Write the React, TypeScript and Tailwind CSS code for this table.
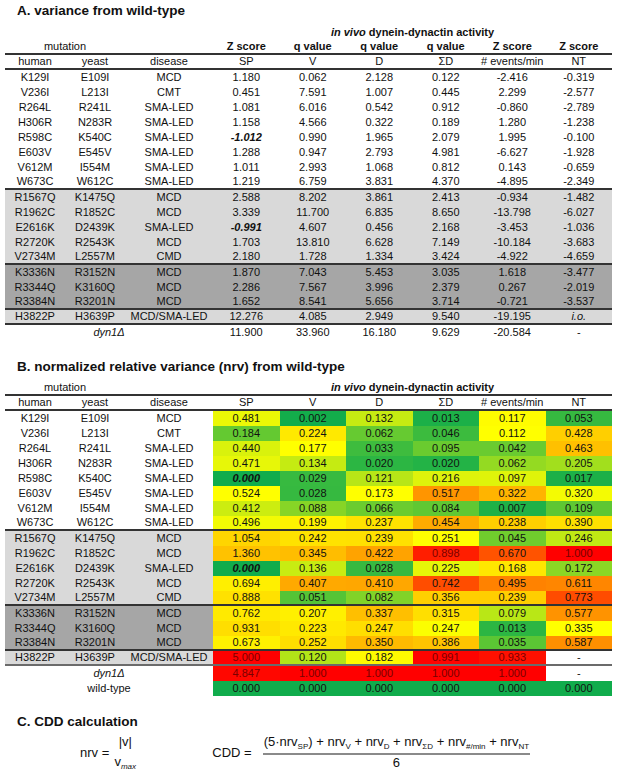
const FONT = "font-['Liberation_Sans',Arial,Helvetica,sans-serif]";
const GRID = "grid grid-cols-[60px_60px_88px_repeat(6,66.5px)] h-[15px]";
const CELL = "flex items-center justify-center whitespace-nowrap";
const LIGHT = "bg-[#d9d9d9]";
const DARK = "bg-[#a6a6a6]";
const TITLE = "pl-[17px] h-[22px] leading-[22px] text-[13.5px] font-bold";

const MUT = [
  ["K129I", "E109I", "MCD"],
  ["V236I", "L213I", "CMT"],
  ["R264L", "R241L", "SMA-LED"],
  ["H306R", "N283R", "SMA-LED"],
  ["R598C", "K540C", "SMA-LED"],
  ["E603V", "E545V", "SMA-LED"],
  ["V612M", "I554M", "SMA-LED"],
  ["W673C", "W612C", "SMA-LED"],
  ["R1567Q", "K1475Q", "MCD"],
  ["R1962C", "R1852C", "MCD"],
  ["E2616K", "D2439K", "SMA-LED"],
  ["R2720K", "R2543K", "MCD"],
  ["V2734M", "L2557M", "CMD"],
  ["K3336N", "R3152N", "MCD"],
  ["R3344Q", "K3160Q", "MCD"],
  ["R3384N", "R3201N", "MCD"],
  ["H3822P", "H3639P", "MCD/SMA-LED"],
];

// "!" = bold italic, "~" = italic
const A_VALS = [
  ["1.180", "0.062", "2.128", "0.122", "-2.416", "-0.319"],
  ["0.451", "7.591", "1.007", "0.445", "2.299", "-2.577"],
  ["1.081", "6.016", "0.542", "0.912", "-0.860", "-2.789"],
  ["1.158", "4.566", "0.322", "0.189", "1.280", "-1.238"],
  ["!-1.012", "0.990", "1.965", "2.079", "1.995", "-0.100"],
  ["1.288", "0.947", "2.793", "4.981", "-6.627", "-1.928"],
  ["1.011", "2.993", "1.068", "0.812", "0.143", "-0.659"],
  ["1.219", "6.759", "3.831", "4.370", "-4.895", "-2.349"],
  ["2.588", "8.202", "3.861", "2.413", "-0.934", "-1.482"],
  ["3.339", "11.700", "6.835", "8.650", "-13.798", "-6.027"],
  ["!-0.991", "4.607", "0.456", "2.168", "-3.453", "-1.036"],
  ["1.703", "13.810", "6.628", "7.149", "-10.184", "-3.683"],
  ["2.180", "1.728", "1.334", "3.424", "-4.922", "-4.659"],
  ["1.870", "7.043", "5.453", "3.035", "1.618", "-3.477"],
  ["2.286", "7.567", "3.996", "2.379", "0.267", "-2.019"],
  ["1.652", "8.541", "5.656", "3.714", "-0.721", "-3.537"],
  ["12.276", "4.085", "2.949", "9.540", "-19.195", "~i.o."],
];
const A_DYN = ["11.900", "33.960", "16.180", "9.629", "-20.584", "-"];

const B_VALS: (number | null)[][] = [
  [0.481, 0.002, 0.132, 0.013, 0.117, 0.053],
  [0.184, 0.224, 0.062, 0.046, 0.112, 0.428],
  [0.44, 0.177, 0.033, 0.095, 0.042, 0.463],
  [0.471, 0.134, 0.02, 0.02, 0.062, 0.205],
  [0.0, 0.029, 0.121, 0.216, 0.097, 0.017],
  [0.524, 0.028, 0.173, 0.517, 0.322, 0.32],
  [0.412, 0.088, 0.066, 0.084, 0.007, 0.109],
  [0.496, 0.199, 0.237, 0.454, 0.238, 0.39],
  [1.054, 0.242, 0.239, 0.251, 0.045, 0.246],
  [1.36, 0.345, 0.422, 0.898, 0.67, 1.0],
  [0.0, 0.136, 0.028, 0.225, 0.168, 0.172],
  [0.694, 0.407, 0.41, 0.742, 0.495, 0.611],
  [0.888, 0.051, 0.082, 0.356, 0.239, 0.773],
  [0.762, 0.207, 0.337, 0.315, 0.079, 0.577],
  [0.931, 0.223, 0.247, 0.247, 0.013, 0.335],
  [0.673, 0.252, 0.35, 0.386, 0.035, 0.587],
  [5.0, 0.12, 0.182, 0.991, 0.933, null],
  [4.847, 1.0, 1.0, 1.0, 1.0, null],
  [0.0, 0.0, 0.0, 0.0, 0.0, 0.0],
];

// 3-colour scale per column: min green, median yellow, max red
const STATS = [0, 1, 2, 3, 4, 5].map((c) => {
  const v = B_VALS.map((r) => r[c]).filter((x): x is number => x !== null).sort((a, b) => a - b);
  const p = (v.length - 1) / 2;
  const mid = (v[Math.floor(p)] + v[Math.ceil(p)]) / 2;
  return { min: v[0], mid, max: v[v.length - 1] };
});

const G = [16, 172, 76];
const Y = [255, 255, 0];
const R = [255, 0, 0];

function heat(v: number, c: number) {
  const { min, mid, max } = STATS[c];
  let a = G, b = Y, t = 1;
  if (v <= mid) t = mid === min ? 1 : (v - min) / (mid - min);
  else { a = Y; b = R; t = Math.pow((v - mid) / (max - mid), 0.85); }
  const rgb = a.map((x, i) => Math.round(x + (b[i] - x) * t));
  const hot = v > mid && t > 0.8;
  return { bg: `rgb(${rgb.join(",")})`, fg: hot ? "#7a0000" : "#111" };
}

const shade = (i: number) => (i >= 13 && i <= 15 ? DARK : i >= 8 ? LIGHT : "");
const rule = (i: number) => ([7, 12, 15, 16].includes(i) ? "border-b-2 border-[#333]" : "");

function Val({ v }: { v: string }) {
  if (v.startsWith("!")) return <b><i>{v.slice(1)}</i></b>;
  if (v.startsWith("~")) return <i>{v.slice(1)}</i>;
  return <>{v}</>;
}

function Mut({ m, bg = "" }: { m: string[]; bg?: string }) {
  return (
    <>
      {m.map((t) => (
        <div key={t} className={`${CELL} ${bg}`}>{t}</div>
      ))}
    </>
  );
}

function SectionA() {
  return (
    <div>
      <div className={TITLE}>A. variance from wild-type</div>
      <div className="ml-[5px] w-[607px]">
        <div className={`${GRID} mt-[3px]`}>
          <div className={`${CELL} col-start-4 col-span-6 font-bold`}>
            <i>in vivo</i>&nbsp;dynein-dynactin activity
          </div>
        </div>
        <div className={`${GRID} border-b-2 border-[#333]`}>
          <div className={`${CELL} col-span-2`}>mutation</div>
          <div />
          {["Z score", "q value", "q value", "q value", "Z score", "Z score"].map((h, i) => (
            <div key={i} className={`${CELL} font-bold`}>{h}</div>
          ))}
        </div>
        <div className={`${GRID} border-b-2 border-[#333]`}>
          {["human", "yeast", "disease", "SP", "V", "D", "ΣD", "# events/min", "NT"].map((h) => (
            <div key={h} className={CELL}>{h}</div>
          ))}
        </div>
        {MUT.map((m, i) => (
          <div key={m[0]} className={`${GRID} ${shade(i)} ${rule(i)}`}>
            <Mut m={m} />
            {A_VALS[i].map((v, j) => (
              <div key={j} className={CELL}><Val v={v} /></div>
            ))}
          </div>
        ))}
        <div className={GRID}>
          <div className={`${CELL} col-span-3 italic`}>dyn1Δ</div>
          {A_DYN.map((v, j) => (
            <div key={j} className={CELL}>{v}</div>
          ))}
        </div>
      </div>
    </div>
  );
}

function HeatCell({ v, c, bold }: { v: number | null; c: number; bold?: boolean }) {
  if (v === null) return <div className={CELL}>-</div>;
  const { bg, fg } = heat(v, c);
  return (
    <div className={CELL} style={{ background: bg, color: fg }}>
      {bold ? <b><i>{v.toFixed(3)}</i></b> : v.toFixed(3)}
    </div>
  );
}

function SectionB() {
  return (
    <div className="mt-[16px]">
      <div className={TITLE}>B. normalized relative variance (nrv) from wild-type</div>
      <div className="ml-[5px] w-[607px]">
        <div className={`${GRID} mt-[3px] border-b-2 border-[#333]`}>
          <div className={`${CELL} col-span-2`}>mutation</div>
          <div />
          <div className={`${CELL} col-span-6 font-bold`}>
            <i>in vivo</i>&nbsp;dynein-dynactin activity
          </div>
        </div>
        <div className={`${GRID} border-b-2 border-[#333]`}>
          {["human", "yeast", "disease", "SP", "V", "D", "ΣD", "# events/min", "NT"].map((h) => (
            <div key={h} className={CELL}>{h}</div>
          ))}
        </div>
        {MUT.map((m, i) => (
          <div key={m[0]} className={`${GRID} ${i === 16 ? "border-b-2 border-[#6b6b6b]" : rule(i)}`}>
            <Mut m={m} bg={shade(i)} />
            {B_VALS[i].map((v, j) => (
              <HeatCell key={j} v={v} c={j} bold={j === 0 && (i === 4 || i === 10)} />
            ))}
          </div>
        ))}
        {["dyn1Δ", "wild-type"].map((label, k) => (
          <div key={label} className={GRID}>
            <div className={`${CELL} col-span-3 ${k === 0 ? "italic" : ""}`}>{label}</div>
            {B_VALS[17 + k].map((v, j) => (
              <HeatCell key={j} v={v} c={j} />
            ))}
          </div>
        ))}
      </div>
    </div>
  );
}

// subscript that does not grow the line box
function Sub({ children, italic }: { children: React.ReactNode; italic?: boolean }) {
  return <span className={`relative top-[3px] text-[8px] ${italic ? "italic" : ""}`}>{children}</span>;
}

function SectionC() {
  return (
    <div className="mt-[15px]">
      <div className={TITLE}>C. CDD calculation</div>
      <div className="flex items-center mt-[2px] text-[13px]">
        {/* nrv = |v| / vmax */}
        <span className="ml-[80px] whitespace-nowrap">nrv =</span>
        <div className="flex flex-col items-center ml-[5px]">
          <div className="leading-[14px] h-[14px]">|v|</div>
          <div className="mt-[4px] h-[1px] w-[22px]" />
          <div className="mt-[1px] leading-[14px] h-[14px]">
            v<Sub italic>max</Sub>
          </div>
        </div>
        {/* CDD */}
        <span className="ml-[76px] whitespace-nowrap">CDD =</span>
        <div className="flex flex-col items-center ml-[11px]">
          <div className="leading-[14px] h-[14px] whitespace-nowrap px-[1px]">
            (5·nrv<Sub>SP</Sub>) + nrv<Sub>V</Sub> + nrv<Sub>D</Sub> + nrv<Sub>ΣD</Sub> + nrv
            <Sub>#/min</Sub> + nrv<Sub>NT</Sub>
          </div>
          <div className="mt-[4px] h-[1.5px] w-full bg-[#8a8a8a]" />
          <div className="mt-[1px] leading-[14px] h-[14px]">6</div>
        </div>
      </div>
    </div>
  );
}

export default function App() {
  return (
    <div className={`w-[617px] h-[774px] bg-white text-[#111] text-[11px] leading-none ${FONT}`}>
      <SectionA />
      <SectionB />
      <SectionC />
    </div>
  );
}
